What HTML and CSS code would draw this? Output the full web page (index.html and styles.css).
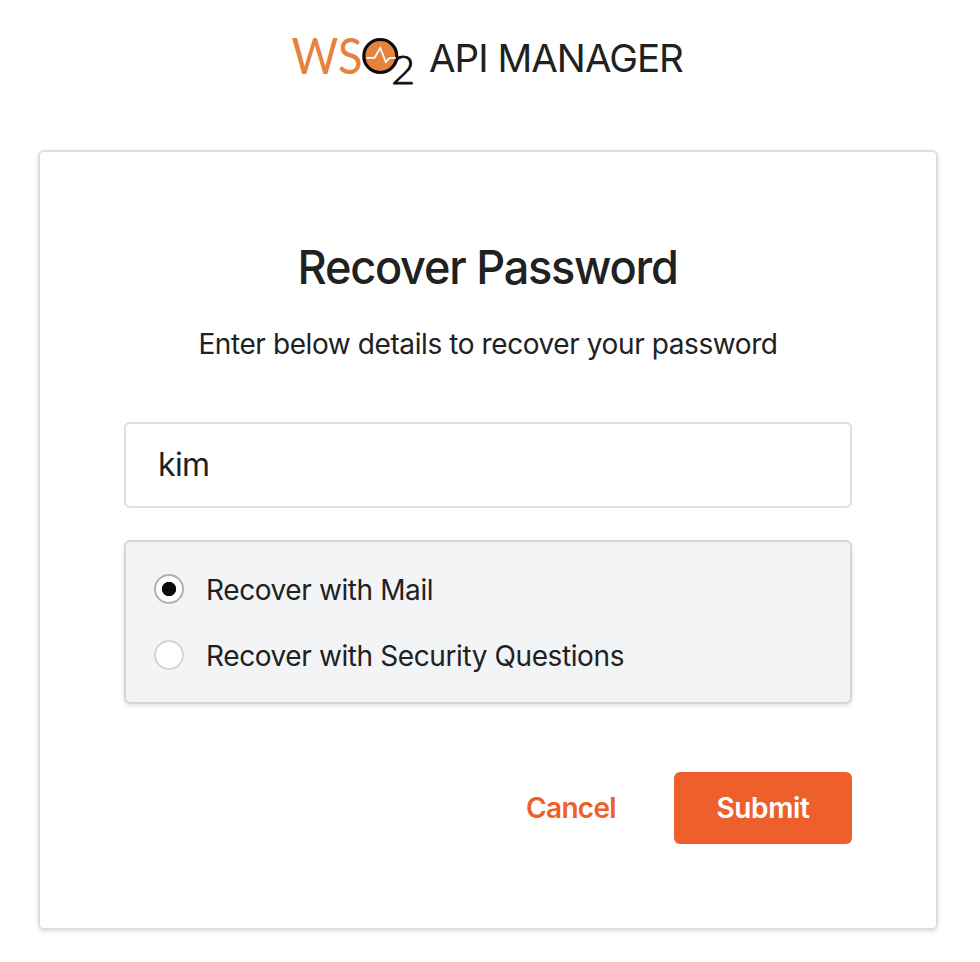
FILE: index.html
```html
<!DOCTYPE html>
<html lang="en">
<head>
<meta charset="utf-8">
<title>Recover Password</title>
<link rel="stylesheet" href="styles.css">
</head>
<body>
<header class="brand">
  <svg class="logo" width="122" height="52" viewBox="292 35 122 52" role="img" aria-label="WSO2">
    <text class="logo-orange" x="291.5" y="74" font-size="49.5" textLength="71" lengthAdjust="spacingAndGlyphs">WS</text>
    <circle cx="380.3" cy="56" r="16.5" fill="#e6823c" stroke="#0b0b0b" stroke-width="3.2"/>
    <path d="M366.5 57.8H374.5L380.3 48L385.8 62L389.5 57.8H396" fill="none" stroke="#fff" stroke-width="1.8"/>
    <text class="logo-black" x="391" y="83.5" font-size="40" textLength="24" lengthAdjust="spacingAndGlyphs">2</text>
  </svg>
  <span class="product">API MANAGER</span>
</header>
<main class="card">
  <h1 class="title">Recover Password</h1>
  <p class="subtitle">Enter below details to recover your password</p>
  <form class="form">
    <input class="username" type="text" value="kim" aria-label="Username">
    <div class="options">
      <label class="option"><input class="radio" type="radio" name="method" checked><span class="mail">Recover with Mail</span></label>
      <label class="option"><input class="radio" type="radio" name="method"><span class="questions">Recover with Security Questions</span></label>
    </div>
    <div class="actions">
      <button class="button cancel" type="button">Cancel</button>
      <button class="button submit" type="button">Submit</button>
    </div>
  </form>
</main>
</body>
</html>
```
FILE: styles.css
```css
* { box-sizing: border-box; }
body {
  margin: 0;
  height: 962px;
  overflow: hidden;
  background: #fff;
  color: #212121;
  font-family: Inter, "Liberation Sans", sans-serif;
}
.brand {
  display: flex;
  height: 150px;
  padding: 35px 0 0 292px;
  align-items: flex-start;
}
.logo { display: block; flex: none; overflow: visible; }
.logo text { font-family: Lato, sans-serif; }
.logo-orange { fill: #e6823c; }
.logo-black { fill: #0b0b0b; font-weight: 300; stroke: #0b0b0b; stroke-width: .8px; }
.product {
  margin-left: 15px;
  font-size: 38.5px;
  line-height: 46px;
  letter-spacing: -0.97px;
  white-space: nowrap;
}
.card {
  width: 900px;
  height: 780px;
  margin-left: 38px;
  padding: 83px 84px 0;
  border: 2px solid #dedede;
  border-radius: 6px;
  box-shadow: 0 2px 4px rgba(34, 36, 38, .12);
}
.title {
  margin: 0;
  height: 64px;
  font-size: 47px;
  line-height: 64px;
  font-weight: 500;
  letter-spacing: -1.3px;
  text-indent: -1px;
  text-align: center;
  white-space: nowrap;
  transform: scaleX(.96);
}
.subtitle {
  margin: 27px 0 0;
  font-size: 28px;
  line-height: 36px;
  letter-spacing: -0.41px;
  text-align: center;
  white-space: nowrap;
}
.form { margin-top: 60px; }
.username {
  display: block;
  width: 728px;
  height: 86px;
  padding: 0 32px 2px;
  border: 2px solid #dedede;
  border-radius: 6px;
  color: #212121;
  font: 32px Inter, sans-serif;
  letter-spacing: -0.6px;
  outline: 0;
}
.options {
  display: flex;
  flex-direction: column;
  gap: 30px;
  height: 164px;
  margin-top: 32px;
  padding: 30px 28px;
  border: 2px solid #d4d5d6;
  border-radius: 6px;
  background: #f3f4f6;
  box-shadow: 0 2px 4px rgba(34, 36, 38, .12);
}
.option {
  display: flex;
  align-items: center;
  height: 36px;
  font-size: 28px;
  line-height: 36px;
  letter-spacing: -0.4px;
  white-space: nowrap;
}
.radio {
  appearance: none;
  flex: none;
  width: 30px;
  height: 30px;
  margin: 0 22px 2px 0;
  border: 2px solid #d4d4d5;
  border-radius: 50%;
  background: #fff;
}
.radio:checked {
  border-color: #aeafb0;
  background: radial-gradient(circle, #0d0d0d 6.8px, #fff 7.5px);
}
.actions {
  display: flex;
  justify-content: flex-end;
  margin-top: 68px;
}
.button {
  height: 72px;
  padding: 0;
  border: 0;
  border-radius: 6px;
  font: 600 28px Inter, sans-serif;
}
.cancel { width: 174px; margin-right: 16px; background: none; color: #ee5f2b; letter-spacing: -0.7px; }
.submit { width: 178px; background: #ee5f2b; color: #fff; letter-spacing: -0.35px; }
```
